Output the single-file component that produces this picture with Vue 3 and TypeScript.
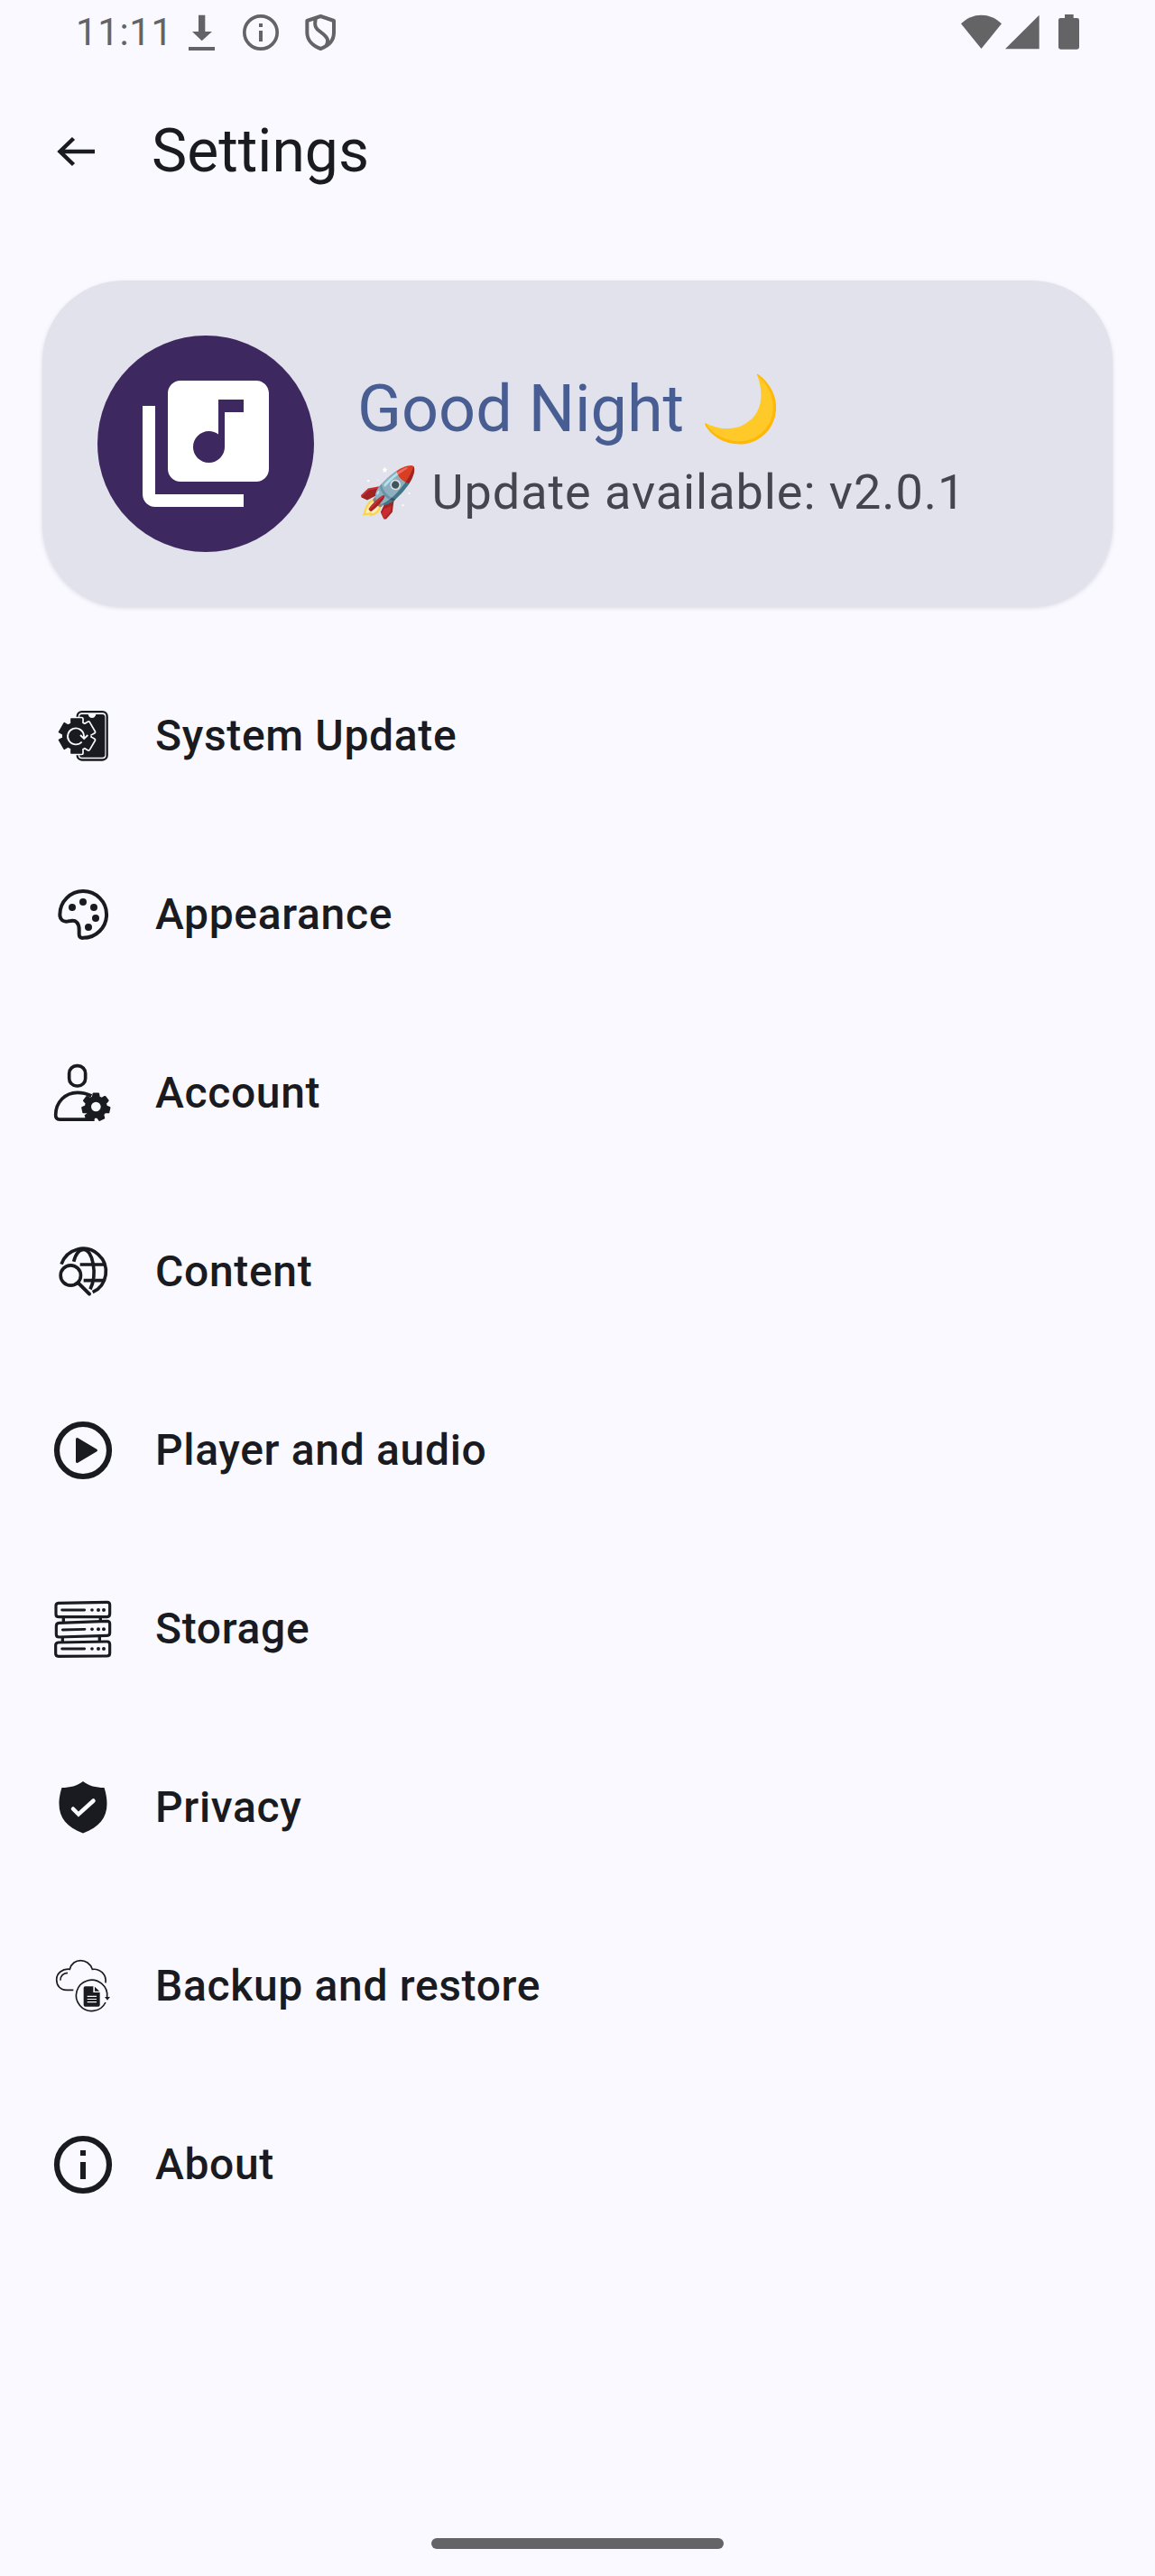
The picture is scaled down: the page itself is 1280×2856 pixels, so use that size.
<script setup lang="ts">
interface SettingsItem {
  id: string
  label: string
  viewBox: string
}

const items: SettingsItem[] = [
  { id: 'update', label: 'System Update', viewBox: '48 30 216 216' },
  { id: 'appearance', label: 'Appearance', viewBox: '48 24 216 216' },
  { id: 'account', label: 'Account', viewBox: '48 33 216 216' },
  { id: 'content', label: 'Content', viewBox: '48 27 216 216' },
  { id: 'player', label: 'Player and audio', viewBox: '0 0 72 72' },
  { id: 'storage', label: 'Storage', viewBox: '48 30 216 216' },
  { id: 'privacy', label: 'Privacy', viewBox: '0 0 72 72' },
  { id: 'backup', label: 'Backup and restore', viewBox: '48 33 216 216' },
  { id: 'about', label: 'About', viewBox: '0 0 72 72' },
]

/** Builds a cog outline; half-angles of the tooth tip and root are in degrees. */
function gear(cx: number, cy: number, inner: number, outer: number, teeth: number, tip: number, root: number): string {
  const points: string[] = []
  const at = (r: number, deg: number) => {
    const a = ((deg - 90) * Math.PI) / 180
    points.push(`${(cx + r * Math.cos(a)).toFixed(1)} ${(cy + r * Math.sin(a)).toFixed(1)}`)
  }
  for (let i = 0; i < teeth; i++) {
    const mid = (360 / teeth) * i
    at(inner, mid - root)
    at(outer, mid - tip)
    at(outer, mid + tip)
    at(inner, mid + root)
  }
  return `M${points.join('L')}Z`
}

const updateGear = gear(134, 138, 45, 59, 6, 17, 22)
const accountGear = gear(199, 187, 34, 45, 7, 10, 17)
</script>

<template>
  <div class="screen">
    <header class="status">
      <div class="status-left">
        <span class="clock">11:11</span>
        <svg class="s-download" viewBox="507 48 87 120" width="29" height="40">
          <path d="M540 50h22v55h23l-34 31-32-31h21zM507 156h87v12h-87z" />
        </svg>
        <svg class="s-info" viewBox="687 48 120 120" width="40" height="40">
          <circle cx="747" cy="108" r="54.5" fill="none" stroke="currentColor" stroke-width="11" />
          <path d="M741 78h12v12h-12zM741 102h12v36h-12z" />
        </svg>
        <svg class="s-shield" viewBox="894 48 102 120" width="34" height="40">
          <path d="M946 54L990 69V108C990 136 971 153 946 162C921 153 901 134 901 108V69ZM930 60C922 92 934 97 948 108C968 123 976 134 963 154" fill="none" stroke="currentColor" stroke-width="12" stroke-linejoin="round" />
        </svg>
      </div>
      <div class="status-right">
        <svg viewBox="75 48 135 117" width="45" height="39">
          <path d="M75 79C94 60 117 50 142.500 50S191 60 210 79L142.500 162Z" />
        </svg>
        <svg class="s-signal" viewBox="222 48 114 117" width="38" height="39">
          <path d="M222 162.500L335 50V162.500Z" />
        </svg>
        <svg class="s-battery" viewBox="399 48 69 117" width="23" height="39">
          <path d="M420 48h29v12h12q7 0 7 7v90q0 7-7 7h-55q-7 0-7-7v-90q0-7 7-7h14z" />
        </svg>
      </div>
    </header>

    <div class="topbar">
      <svg class="back" viewBox="0 0 48 48" width="48" height="48">
        <path d="M45 24H6M21.500 9.500L6.500 24L21.500 38.500" fill="none" stroke="currentColor" stroke-width="4.500" />
      </svg>
      <h1>Settings</h1>
    </div>

    <section class="card">
      <div class="avatar">
        <svg viewBox="0 0 24 24" width="168" height="168">
          <path d="M20 2H8c-1.100 0-2 .9-2 2v12c0 1.100.9 2 2 2h12c1.100 0 2-.9 2-2V4c0-1.100-.9-2-2-2zm-2 5h-3v5.500c0 1.380-1.120 2.500-2.500 2.500S10 13.880 10 12.500s1.120-2.500 2.500-2.500c.57 0 1.080.19 1.500.51V5h4v2zM4 6H2v14c0 1.100.9 2 2 2h14v-2H4V6z" />
        </svg>
      </div>
      <div class="card-text">
        <div class="greeting">Good Night 🌙</div>
        <div class="version">🚀 Update available: v2.0.1</div>
      </div>
    </section>

    <nav class="list">
      <div v-for="item in items" :key="item.id" class="row">
        <svg class="icon" :viewBox="item.viewBox" width="72" height="72">
          <g v-if="item.id === 'update'">
            <rect x="137" y="57.500" width="99" height="160" rx="15" class="line" stroke-width="7" />
            <path d="M152 66H173Q176 78 186 78T199 66H220Q229 66 229 75V200Q229 209 220 209H152Q144 209 144 200V75Q144 66 152 66Z" />
            <path :d="updateGear" class="halo" stroke-width="15" />
            <path :d="updateGear" stroke="currentColor" stroke-width="5" stroke-linejoin="round" />
            <path d="M152 157.500A27 27 0 1 1 159 137V146M147 135L159.500 147L172 135" class="cut" stroke-width="5.500" />
          </g>
          <g v-else-if="item.id === 'appearance'">
            <path d="M79 132A77.500 78 0 0 1 156.500 54A77.500 77.500 0 0 1 156.500 209.500C148 211 143 206 143 197V182C143 160 132 149 115 153L108 154C90 158 79 149 79 132Z" class="line" stroke-width="12" />
            <circle cx="120" cy="108" r="12" />
            <circle cx="156" cy="90" r="12" />
            <circle cx="192" cy="108" r="12" />
            <circle cx="198" cy="144" r="12" />
            <circle cx="174" cy="174" r="12" />
          </g>
          <g v-else-if="item.id === 'account'">
            <rect x="110" y="50" width="54" height="67" rx="25" class="line" stroke-width="11" />
            <path d="M194 228.500H78Q65 228.500 65 214C65 170 98 139 137 139Q162 139 184 150M165 211Q169 216 169 227" class="line" stroke-width="11" />
            <path :d="accountGear" stroke="currentColor" stroke-width="7" stroke-linejoin="round" />
            <circle cx="199" cy="186" r="16" class="hole" />
          </g>
          <g v-else-if="item.id === 'content'">
            <path d="M84 110A76 76 0 1 1 188 203" class="line" stroke-width="11" />
            <path d="M125 101C131 78 142 61 158 61C188 61 205 142 180 193M146 111H230M158 164H228" class="line" stroke-width="11" />
            <circle cx="115" cy="147" r="33.500" class="line" stroke-width="11" />
            <path d="M140 172L177 209" class="line" stroke-width="12" stroke-linecap="round" />
          </g>
          <g v-else-if="item.id === 'player'">
            <circle cx="36" cy="36" r="29" class="line" stroke-width="6.200" />
            <path d="M29.500 23.500L50.500 36L29.500 48.500Z" stroke="currentColor" stroke-width="3" stroke-linejoin="round" />
          </g>
          <g v-else-if="item.id === 'storage'">
            <path d="M74 52L236 49Q245 49 245 58V88Q245 98 236 98L76 98Q66 98 66 89V61Q66 53 74 52ZM76 118L236 112Q245 112 245 121V151Q245 160 237 160L76 165Q67 165 67 156V128Q67 119 76 118ZM74 183L236 180Q245 180 245 190V219Q245 228 236 228L74 229Q65 229 65 220V192Q65 184 74 183Z" class="line" stroke-width="9.500" />
            <path d="M91 98V117M214 98V113M88 164V183M211 161V181" class="line" stroke-width="10" />
            <path d="M86 75H161M88 141L162 139M86 204H161" class="line" stroke-width="8.500" stroke-linecap="round" />
            <g v-for="y in [75, 139, 204]" :key="y">
              <circle cx="186" :cy="y" r="5.500" />
              <circle cx="207" :cy="y" r="6" />
              <circle cx="225" :cy="y" r="6" />
            </g>
          </g>
          <g v-else-if="item.id === 'privacy'">
            <path d="M36 7C29 12 22 14 12.500 14C10 22 9.500 27 9.500 32C9.500 47 18 58 36 64.500C54 58 62.500 47 62.500 32C62.500 27 62 22 59.500 14C50 14 43 12 36 7Z" />
            <path d="M25 37.500L31 43.500L47.500 28.500" class="cut" stroke-width="4.500" stroke-linecap="round" />
          </g>
          <g v-else-if="item.id === 'backup'">
            <path d="M124 154H101C80 154 68 139 68 119C68 98 88 82 112 85C121 46 174 46 187 85C212 82 235 102 231 130M81 122C80 107 91 97 105 97" class="line" stroke-width="5" />
            <path d="M231 195A51.500 51.500 0 1 1 236 178" class="line" stroke-width="5" />
            <path d="M228 177H246L237 188Z" />
            <path d="M163 142H190V162H212V204Q212 209 207 209H163Q158 209 158 204V147Q158 142 163 142ZM195 143L211 158H195Z" />
            <path d="M170 175H201M170 184.500H201M170 194H201" class="cut" stroke-width="3.500" />
          </g>
          <g v-else>
            <circle cx="36" cy="36" r="29" class="line" stroke-width="6.200" />
            <path d="M33 20h6v6h-6zM33 33h6v19h-6z" />
          </g>
        </svg>
        <span class="label">{{ item.label }}</span>
      </div>
    </nav>

    <footer class="nav-area"><div class="handle"></div></footer>
  </div>
</template>

<style>
body {
  background: #f9f9ff;
}
</style>

<style scoped>
.screen {
  width: 1280px;
  height: 2856px;
  display: flex;
  flex-direction: column;
  overflow: hidden;
  background: #f9f9ff;
  color: #1a1b20;
  font-family: Roboto, "Noto Color Emoji", sans-serif;
}
svg {
  display: block;
  flex: none;
  fill: currentColor;
}
.status {
  height: 72px;
  box-sizing: border-box;
  padding: 0 84px 0 84px;
  display: flex;
  justify-content: space-between;
  color: #646467;
}
.status-left,
.status-right {
  display: flex;
  align-items: flex-start;
  padding-top: 16px;
}
.clock {
  width: 125px;
  height: 40px;
  line-height: 40px;
  font-size: 42px;
  letter-spacing: 0.6px;
}
.s-info {
  margin-left: 31px;
}
.s-shield {
  margin-left: 29px;
}
.s-signal {
  margin-left: 4px;
}
.s-battery {
  margin-left: 21px;
}
.topbar {
  height: 192px;
  display: flex;
  align-items: center;
  padding-left: 60px;
}
h1 {
  margin: 0 0 0 60px;
  font-size: 66px;
  line-height: 84px;
  font-weight: 400;
}
.card {
  margin: 47px 47px 0 47px;
  height: 361px;
  box-sizing: border-box;
  padding-left: 61px;
  border-radius: 90px;
  background: #e2e2ec;
  box-shadow: 0 2px 5px rgba(0, 0, 0, 0.13);
  display: flex;
  align-items: center;
}
.avatar {
  width: 240px;
  height: 240px;
  border-radius: 50%;
  background: #3e2860;
  color: #fff;
  display: flex;
  align-items: center;
  justify-content: center;
  flex: none;
}
.card-text {
  margin-left: 48px;
  padding-top: 4px;
  display: flex;
  flex-direction: column;
  gap: 8px;
  white-space: nowrap;
}
.greeting {
  height: 96px;
  line-height: 96px;
  font-size: 72px;
  color: #485d92;
}
.version {
  height: 72px;
  line-height: 72px;
  font-size: 54px;
  letter-spacing: 0.95px;
  color: #44464f;
}
.list {
  margin-top: 45px;
}
.row {
  height: 198px;
  display: flex;
  align-items: center;
  padding-left: 56px;
}
.label {
  margin-left: 44px;
  font-size: 48px;
  line-height: 72px;
  font-weight: 500;
  letter-spacing: 0.66px;
}
.line {
  fill: none;
  stroke: currentColor;
}
.halo {
  fill: #f9f9ff;
  stroke: #f9f9ff;
  stroke-linejoin: round;
}
.cut {
  fill: none;
  stroke: #f9f9ff;
}
.hole {
  fill: #f9f9ff;
}
.nav-area {
  margin-top: auto;
  height: 42px;
  display: flex;
  justify-content: center;
}
.handle {
  width: 324px;
  height: 12px;
  border-radius: 6px;
  background: #646467;
}
</style>
